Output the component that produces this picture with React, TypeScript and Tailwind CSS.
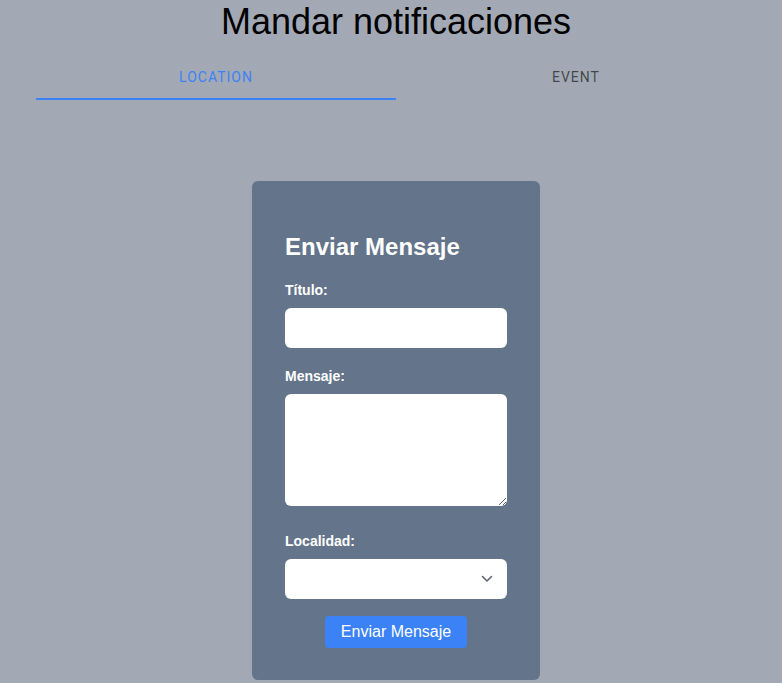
import { useState } from "react";

const tabs = ["Location", "Event"];

export default function App() {
  const [tab, setTab] = useState(0);

  return (
    <div className="min-h-screen bg-[#a3a9b4] font-['Liberation_Sans',Arial,sans-serif]">
      <div className="ml-[36px] w-[720px] pt-[2px]">
        <h1 className="text-center text-4xl leading-10 text-black">Mandar notificaciones</h1>

        <div className="mt-[10px] flex">
          {tabs.map((t, i) => (
            <button
              key={t}
              onClick={() => setTab(i)}
              className={
                i === tab
                  ? "flex h-12 flex-1 items-center justify-center border-b-2 border-[#3b82f6] pt-[4px] font-['Roboto',sans-serif] text-sm font-normal uppercase tracking-[1px] text-[#3b82f6]"
                  : "flex h-12 flex-1 items-center justify-center border-b-2 border-transparent pt-[4px] font-['Roboto',sans-serif] text-sm font-normal uppercase tracking-[1px] text-black/60"
              }
            >
              {t}
            </button>
          ))}
        </div>

        <div className="mt-[81px] flex justify-center">
          <form
            onSubmit={(e) => e.preventDefault()}
            className="w-[288px] rounded-md bg-[#64748b] px-[33px] pb-8 pt-[50px]"
          >
            <h2 className="mb-[17px] text-2xl font-bold text-white">Enviar Mensaje</h2>

            <label className="mb-2 block text-sm font-bold text-white">Título:</label>
            <input type="text" className="mb-[18px] block h-10 w-full rounded-md bg-white px-3 text-sm outline-none" />

            <label className="mb-2 block text-sm font-bold text-white">Mensaje:</label>
            <textarea className="mb-[25px] block h-[112px] w-full rounded-md bg-white px-3 py-2 text-sm outline-none" />

            <label className="mb-2 block text-sm font-bold text-white">Localidad:</label>
            <div className="relative">
              <select className="block h-10 w-full appearance-none rounded-md bg-white px-3 text-sm outline-none">
                <option value=""></option>
              </select>
              <svg
                className="pointer-events-none absolute right-[14px] top-[16px]"
                width="12"
                height="8"
                viewBox="0 0 12 8"
                fill="none"
                stroke="#5f6670"
                strokeWidth="1.6"
                strokeLinecap="round"
                strokeLinejoin="round"
              >
                <path d="M1.5 1.5 6 6l4.5-4.5" />
              </svg>
            </div>

            <div className="mt-[17px] flex justify-center">
              <button type="submit" className="rounded bg-[#3b82f6] px-4 py-1 text-base text-white">
                Enviar Mensaje
              </button>
            </div>
          </form>
        </div>
      </div>
    </div>
  );
}
